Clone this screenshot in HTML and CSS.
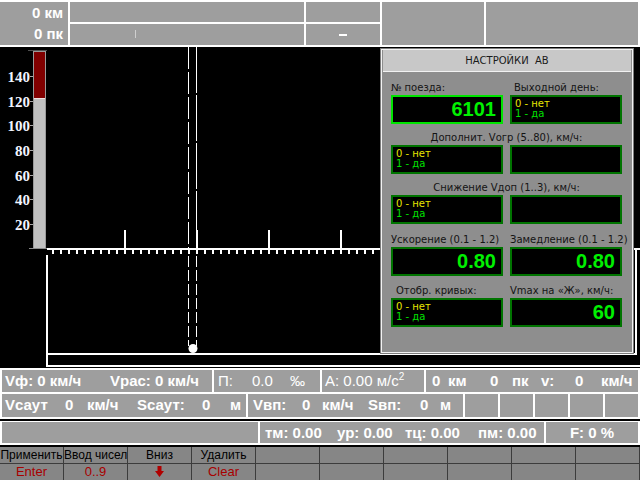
FILE: index.html
```html
<!DOCTYPE html>
<html lang="ru">
<head>
<meta charset="utf-8">
<title>Настройки АВ</title>
<link rel="stylesheet" href="styles.css">
</head>
<body>
<div class="screen">
  <div class="top">
    <div class="tc c1"><div>0 км</div><div>0 пк</div></div>
    <div class="split c2"><div class="r1"></div><div class="r2"><span class="tick"></span></div></div>
    <div class="split c3"><div class="r1"></div><div class="r2"><span class="dash"></span></div></div>
    <div class="tc c4"></div>
    <div class="tc c5"></div>
  </div>

  <div class="main">
    <svg class="chart" width="640" height="321" viewBox="0 47 640 321">
      <defs>
        <pattern id="minor" x="52" y="250" width="8" height="4" patternUnits="userSpaceOnUse">
          <rect width="2" height="4" fill="#fff"/>
        </pattern>
      </defs>
      <!-- speed scale -->
      <rect x="28" y="50" width="19" height="1" fill="#505050"/>
      <rect x="33.5" y="51.5" width="12" height="197" fill="#c0c0c0" stroke="#9a9a9a"/>
      <rect x="34" y="52" width="11" height="46" fill="#800000"/>
      <rect x="34" y="98" width="11" height="1" fill="#f0e0e0"/>
      <rect x="29" y="248" width="18" height="1" fill="#8a8a8a"/>
      <g fill="#a8a8a8">
        <rect x="30" y="76" width="3" height="1"/>
        <rect x="30" y="101" width="3" height="1"/>
        <rect x="30" y="125" width="3" height="1"/>
        <rect x="30" y="150" width="3" height="1"/>
        <rect x="30" y="175" width="3" height="1"/>
        <rect x="30" y="199" width="3" height="1"/>
        <rect x="30" y="224" width="3" height="1"/>
      </g>
      <g class="scale" text-anchor="end">
        <text x="30" y="81.5">140</text>
        <text x="30" y="106.5">120</text>
        <text x="30" y="130.5">100</text>
        <text x="30" y="155.5">80</text>
        <text x="30" y="180.5">60</text>
        <text x="30" y="204.5">40</text>
        <text x="30" y="229.5">20</text>
      </g>
      <!-- axis -->
      <rect x="47" y="248" width="593" height="2" fill="#fff"/>
      <rect x="52" y="250" width="584" height="4" fill="url(#minor)"/>
      <g fill="#fff">
        <rect x="124" y="230" width="2" height="18"/>
        <rect x="196" y="230" width="2" height="18"/>
        <rect x="268" y="230" width="2" height="18"/>
        <rect x="340" y="230" width="2" height="18"/>
      </g>
      <!-- position lines -->
      <line x1="188.5" y1="47" x2="188.5" y2="248" stroke="#fff" stroke-width="1" stroke-dasharray="22 3"/>
      <line x1="196.5" y1="47" x2="196.5" y2="248" stroke="#fff" stroke-width="1" stroke-dasharray="46 2"/>
      <line x1="188.5" y1="256" x2="188.5" y2="346" stroke="#fff" stroke-width="1" stroke-dasharray="11 3"/>
      <line x1="196.5" y1="256" x2="196.5" y2="346" stroke="#fff" stroke-width="1" stroke-dasharray="11 3"/>
      <circle cx="193" cy="348.5" r="4.5" fill="#fff"/>
      <!-- lower box -->
      <g fill="#fff">
        <rect x="46" y="255" width="2" height="112"/>
        <rect x="46" y="353" width="591" height="2"/>
        <rect x="635" y="248" width="2" height="107"/>
        <rect x="46" y="365" width="594" height="2"/>
      </g>
    </svg>

    <div class="dialog">
      <div class="dtitle">НАСТРОЙКИ&nbsp;&nbsp;АВ</div>
      <div class="dbody">
        <div class="blk b1">
          <div class="lbl">№ поезда:</div>
          <div class="lbl ind">Выходной день:</div>
          <div class="fld active"><div class="val">6101</div></div>
          <div class="fld"><div class="opt"><div class="y">0 - нет</div><div class="g">1 - да</div></div></div>
        </div>
        <div class="blk b2">
          <div class="lbl wide">Дополнит. Vогр (5..80), км/ч:</div>
          <div class="fld"><div class="opt"><div class="y">0 - нет</div><div class="g">1 - да</div></div></div>
          <div class="fld"></div>
        </div>
        <div class="blk b3">
          <div class="lbl wide">Снижение Vдоп (1..3), км/ч:</div>
          <div class="fld"><div class="opt"><div class="y">0 - нет</div><div class="g">1 - да</div></div></div>
          <div class="fld"></div>
        </div>
        <div class="blk b4">
          <div class="lbl">Ускорение (0.1 - 1.2)</div>
          <div class="lbl">Замедление (0.1 - 1.2)</div>
          <div class="fld"><div class="val">0.80</div></div>
          <div class="fld"><div class="val">0.80</div></div>
        </div>
        <div class="blk b5">
          <div class="lbl ind2">Отобр. кривых:</div>
          <div class="lbl">Vmax на «Ж», км/ч:</div>
          <div class="fld"><div class="opt"><div class="y">0 - нет</div><div class="g">1 - да</div></div></div>
          <div class="fld"><div class="val">60</div></div>
        </div>
      </div>
    </div>
  </div>

  <div class="info">
    <div class="irow ra">
      <div class="ic a1 bold"><span class="w105">Vф: 0 км/ч</span><span>Vрас: 0 км/ч</span></div>
      <div class="ic a2"><span class="w34">П:</span><span class="w38">0.0</span><span>‰</span></div>
      <div class="ic a3"><span>А: 0.00 м/с<sup>2</sup></span></div>
      <div class="ic a4 bold"><span class="w16">0</span><span class="w42">км</span><span class="w22">0</span><span class="w29">пк</span><span class="w34">v:</span><span class="w26">0</span><span>км/ч</span></div>
    </div>
    <div class="irow rb">
      <div class="ic b1c bold"><span class="w60">Vсаут</span><span class="w22">0</span><span class="w50">км/ч</span><span class="w65">Sсаут:</span><span class="w28">0</span><span>м</span></div>
      <div class="ic b2c bold"><span class="w49">Vвп:</span><span class="w20">0</span><span class="w46">км/ч</span><span class="w52">Sвп:</span><span class="w20">0</span><span>м</span></div>
      <div class="ic e"></div>
      <div class="ic e"></div>
      <div class="ic e"></div>
      <div class="ic e"></div>
      <div class="ic e"></div>
    </div>
  </div>

  <div class="info2">
    <div class="ic c1c"></div>
    <div class="ic c2c bold"><span class="w72">тм: 0.00</span><span class="w68">ур: 0.00</span><span class="w73">тц: 0.00</span><span>пм: 0.00</span></div>
    <div class="ic c3c bold">F: 0 %</div>
  </div>

  <div class="keys">
    <div class="key k1">Применить</div>
    <div class="key k1">Ввод чисел</div>
    <div class="key k1">Вниз</div>
    <div class="key k1">Удалить</div>
    <div class="key k1"></div>
    <div class="key k1"></div>
    <div class="key k1"></div>
    <div class="key k1"></div>
    <div class="key k1"></div>
    <div class="key k1"></div>
    <div class="key k2">Enter</div>
    <div class="key k2">0..9</div>
    <div class="key k2"><svg class="arrow" width="9" height="11" viewBox="0 0 9 11"><path d="M2.5 0h4v5h2.5L4.5 11 0 5h2.5z" fill="#b00000"/></svg></div>
    <div class="key k2">Clear</div>
    <div class="key k2"></div>
    <div class="key k2"></div>
    <div class="key k2"></div>
    <div class="key k2"></div>
    <div class="key k2"></div>
    <div class="key k2"></div>
  </div>
</div>
</body>
</html>
```
FILE: styles.css
```css
* { box-sizing: border-box; margin: 0; padding: 0; }
html, body { width: 640px; height: 480px; overflow: hidden; background: #000; }
body { font-family: "Liberation Sans", Arial, sans-serif; }
.screen { width: 640px; height: 480px; background: #000; }

/* top bar */
.top { display: flex; gap: 2px; height: 47px; background: #fff; padding: 2px 2px 2px 0; }
.tc { background: #9e9e9e; }
.c1 { width: 68px; padding-right: 5px; color: #fff; font-weight: bold; font-size: 15px; text-align: right; }
.c1 div { height: 21px; line-height: 21px; }
.split { display: flex; flex-direction: column; gap: 2px; }
.split .r1 { height: 20px; background: #9e9e9e; }
.split .r2 { flex: 1; background: #9e9e9e; }
.c2 { width: 234px; }
.c3 { width: 74px; }
.c4 { width: 102px; }
.c5 { flex: 1; }
.tick { display: block; width: 1px; height: 8px; margin: 6px 0 0 65px; background: #cfcfcf; }
.dash { display: block; width: 8px; height: 2px; margin: 10px 0 0 33px; background: #fff; }

/* chart */
.main { position: relative; height: 321px; background: #000; }
.chart { display: block; }
.scale { font-family: "Liberation Serif", "Times New Roman", serif; font-weight: bold; font-size: 15px; fill: #f2f5ff; }

/* dialog */
.dialog { position: absolute; left: 380px; top: 1px; width: 254px; height: 306px; background: #8e8e8e; border: 1px solid #7c7c7c; box-shadow: inset 0 0 0 1px #f2f2f2; }
.dtitle { margin: 1px 2px 0 2px; height: 22px; background: #c8c8c8; border-bottom: 1px solid #f2f2f2; text-align: center; font-family: "DejaVu Sans", sans-serif; font-size: 10px; line-height: 21px; color: #1a1a1a; }
.dbody { padding: 0 9px 0 10px; }
.blk { display: grid; grid-template-columns: 112px 112px; column-gap: 7px; }
.b1 { margin-top: 8px; }
.b2, .b3 { margin-top: 6px; }
.b4 { margin-top: 8px; }
.b5 { margin-top: 7px; }
.lbl { height: 15px; line-height: 15px; font-family: "DejaVu Sans", sans-serif; font-size: 10px; color: #141414; white-space: nowrap; }
.lbl.wide { grid-column: 1 / 3; text-align: center; }
.lbl.ind { padding-left: 4px; }
.lbl.ind2 { padding-left: 5px; }
.fld { height: 29px; background: #000; border: 2px solid #007400; }
.fld.active { border-color: #00e400; }
.val { text-align: right; padding-right: 5px; font-family: "Liberation Sans", Arial, sans-serif; font-weight: bold; font-size: 20px; line-height: 25px; color: #00f000; }
.opt { padding: 2px 0 0 3px; font-family: "DejaVu Sans", sans-serif; font-size: 10px; line-height: 10px; }
.y { color: #e6e600; }
.g { color: #00e000; }

/* info bars */
.info { height: 51px; background: #fff; padding: 2px; display: flex; flex-direction: column; gap: 2px; }
.irow { display: flex; gap: 2px; }
.ra { height: 22px; }
.rb { height: 23px; }
.ic { background: #9e9e9e; color: #fff; font-size: 15px; line-height: 22px; white-space: nowrap; overflow: hidden; }
.ic span { display: inline-block; }
.bold { font-weight: bold; }
.a1 { width: 210px; padding-left: 3px; }
.a2 { width: 106px; padding-left: 4px; }
.a3 { width: 102px; padding-left: 3px; }
.a4 { flex: 1; padding-left: 6px; }
.b1c { width: 244px; padding-left: 3px; }
.b2c { width: 215px; padding-left: 5px; }
.e { width: 33px; }
.ic sup { font-size: 10px; line-height: 0; vertical-align: 6px; }

.info2 { margin-top: 2px; height: 24px; background: #fff; padding: 1px 2px 2px 2px; display: flex; gap: 2px; }
.c1c { width: 256px; }
.c2c { width: 284px; padding-left: 5px; line-height: 21px; }
.c3c { flex: 1; text-align: center; line-height: 21px; }

.w16 { width: 16px; } .w20 { width: 20px; } .w22 { width: 22px; } .w26 { width: 26px; }
.w28 { width: 28px; } .w29 { width: 29px; } .w34 { width: 34px; } .w38 { width: 38px; }
.w42 { width: 42px; } .w46 { width: 46px; } .w49 { width: 49px; } .w50 { width: 50px; }
.w52 { width: 52px; } .w60 { width: 60px; } .w65 { width: 65px; } .w68 { width: 68px; }
.w72 { width: 72px; } .w73 { width: 73px; } .w105 { width: 105px; }

/* key hints */
.keys { margin-top: 2px; height: 33px; display: grid; grid-template-columns: repeat(10, 64px); grid-template-rows: 17px 16px; background: #868686; }
.key { border-right: 1px solid #3c3c3c; text-align: center; white-space: nowrap; }
.k1 { border-bottom: 1px solid #3c3c3c; font-size: 12px; line-height: 16px; color: #000; }
.k2 { font-size: 13px; line-height: 16px; color: #a80000; }
.arrow { display: inline-block; vertical-align: -1px; }
```
